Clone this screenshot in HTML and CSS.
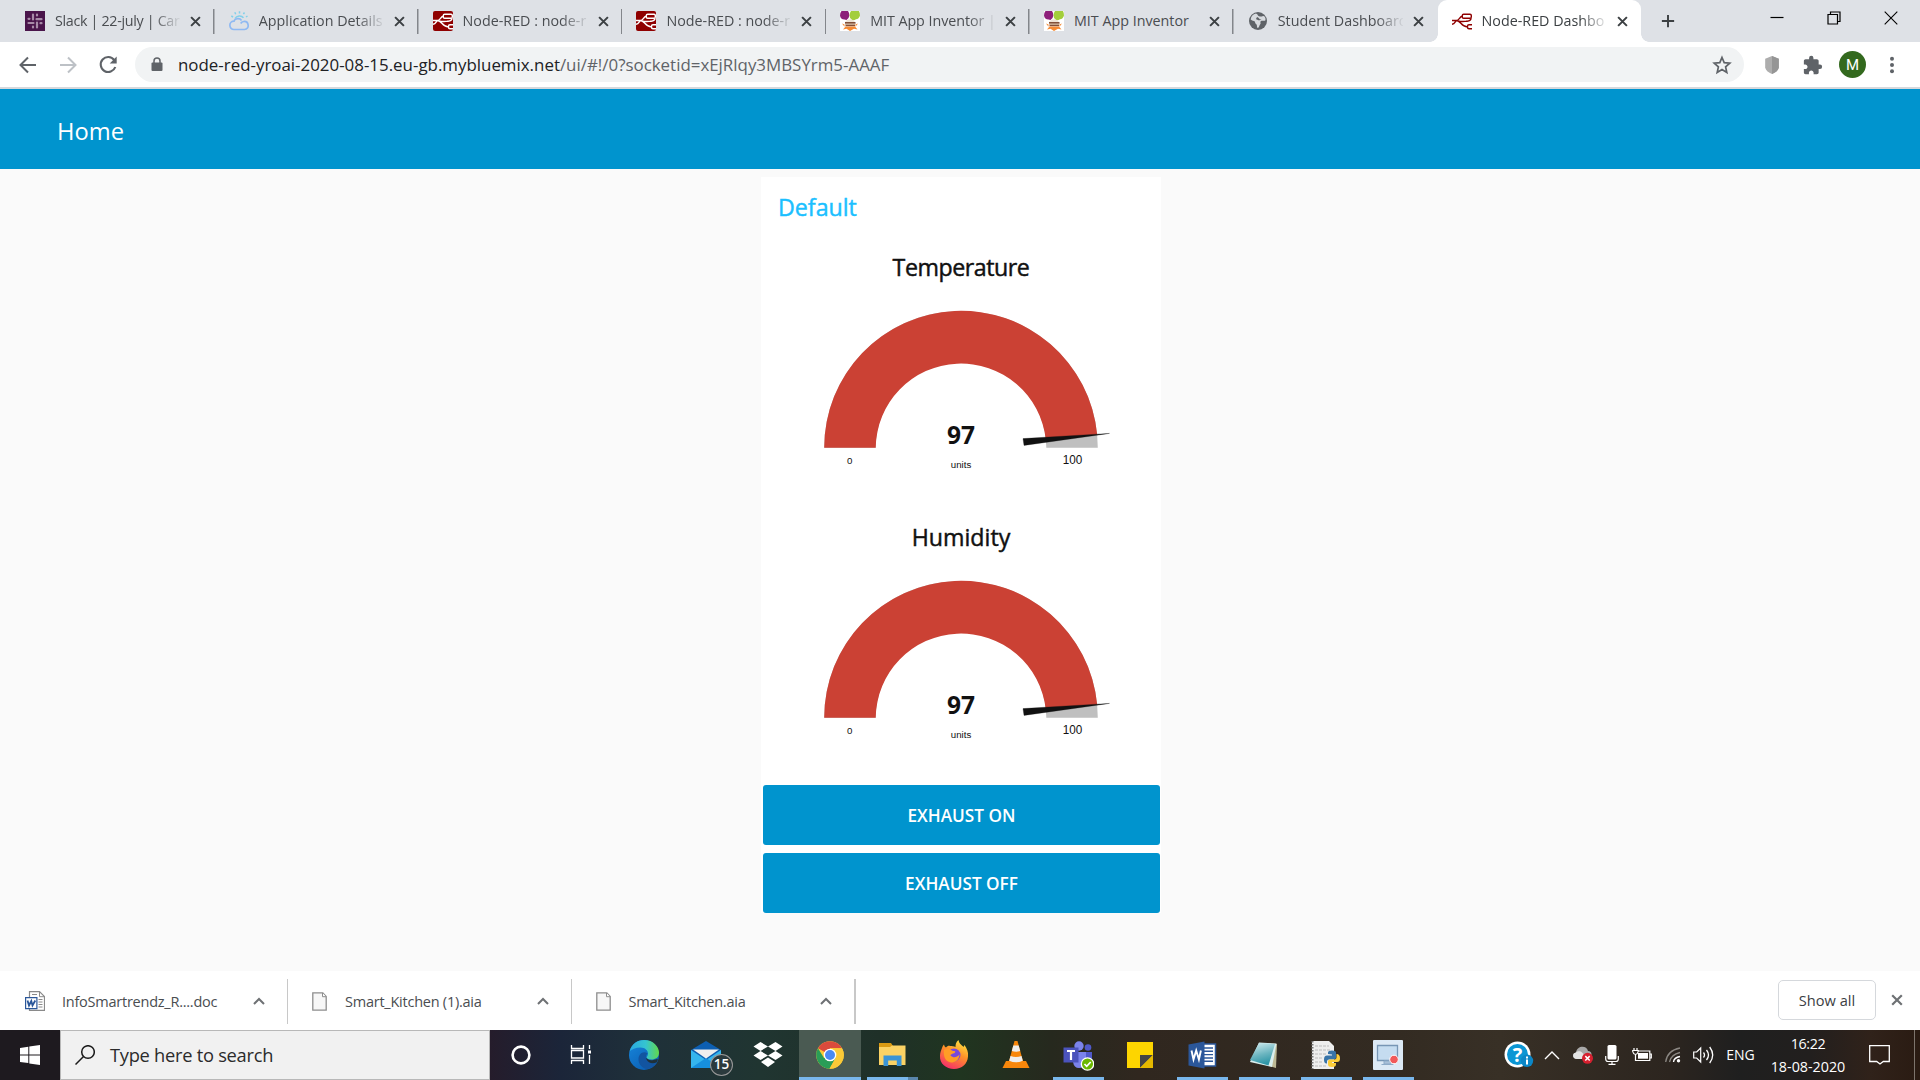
FILE: index.html
```html
<!DOCTYPE html>
<html lang="en">
<head>
<meta charset="utf-8">
<title>Node-RED Dashboard</title>
<link rel="stylesheet" href="styles.css">
</head>
<body>
<svg class="defs" width="0" height="0" aria-hidden="true">
  <symbol id="x" viewBox="0 0 12 12"><path d="M1.2 1.2l9.600 9.600M10.800 1.200L1.200 10.800" fill="none" stroke="currentColor" stroke-width="2.200"/></symbol>
  <symbol id="nr" viewBox="0 0 20 20"><path d="M0 9.500h4.500c3 0 3-4.300 6-4.300M4.500 9.500c4 0 5 6.300 10.500 6.300M0 13.200c3.500 0 3-3.700 5-3.700M6 9.800c3 1 5 .7 8 .5 3-.3 5 0 5-3" fill="none" stroke="currentColor" stroke-width="1.400"/><rect x="10.300" y="3.300" width="9" height="3.900" rx="1.300" fill="none" stroke="currentColor" stroke-width="1.400"/><path d="M20 13.700h-3q-1.500 0-1.500 1.500v1q0 1.500 1.500 1.500h3" fill="none" stroke="currentColor" stroke-width="1.400"/></symbol>
  <symbol id="mit" viewBox="0 0 20 20"><path fill="#fff" d="M0 0h20v20H0z"/><path d="M1.500 0H8q1.500 2 1.300 4.500Q9 8 6.500 9L4.500 8.500Q.5 8.500 0 4.500 0 1.500 1.500 0z" fill="#8d1f7a"/><path d="M11 0h8q1 2 1 4.500Q19 8 16 8.300q-2 1.500-4 .7-2.500-1.500-2.500-4.500Q9.500 2 11 0z" fill="#a3ce3c"/><path d="M6.500 9.500q3.500-2.500 7 0L15 11H5z" fill="#eee3d5"/><path d="M5 11h10.500v1.700H5zM5.500 13.500h9.500v1.700H5.500z" fill="#82503a"/><path d="M5 12.700h10.300v.8H5z" fill="#c9a27c"/><path d="M2 12.500l2.500 1v2.300zM18 12.500l-2.500 1v2.300zM3 18.500l2.500-3H15l2.500 3-3.500-.7L10 20l-3.500-2.200z" fill="#f58a34"/></symbol>
  <symbol id="up" viewBox="0 0 12 8"><path d="M1 7l5-5 5 5" fill="none" stroke="currentColor" stroke-width="2"/></symbol>
  <symbol id="page" viewBox="0 0 15 19"><path d="M.8.8h10l3.400 3.600v13.800H.8z" fill="#f7f7f7" stroke="#8d8d8d" stroke-width="1.300"/><path d="M10.500 1v3.700h3.500" fill="#fff" stroke="#8d8d8d"/></symbol>
  <symbol id="dial" viewBox="0 0 400 190">
    <path d="M63.200 151.700a136.800 136.800 0 0 1 273.600 0h-51.500a85.300 85.300 0 0 0-170.600 0z" fill="#bfbfbf"/>
    <path d="M63.200 151.700a136.800 136.800 0 0 1 273-12.900l-51.400 4.900a85.300 85.300 0 0 0-170.100 8z" fill="#cb4134"/>
    <path d="M262 142.600l86.500-5.200-85.500 12z" fill="#111" stroke="#111" stroke-width=".3"/>
  </symbol>
</svg>

<header class="tabs">
  <div class="tab">
    <svg class="fav" viewBox="0 0 20 20"><path fill="#4a154b" d="M0 0h20v20H0z"/><g stroke="#a88ba8" stroke-width="2.200" stroke-linecap="round" fill="none"><path d="M8 3.500v5M3.500 7.800h1M12 3.500v1M16.500 8.200h-5M12 11.500v5M15.500 12.200h1M8 15.500v1M3.500 12h5"/></g></svg>
    <span class="title tight">Slack | 22-july | Car</span><svg class="close"><use href="#x"/></svg>
  </div>
  <div class="tab">
    <svg class="fav" viewBox="0 0 20 20"><g fill="none" stroke="#82d0ea" stroke-width="1.500"><path d="M6 7.500a5 4.500 0 0 1 8.500-.8M10.500.3v2.200M5.800 1.300l.9 1.900M2.300 5l1.800 1M15.500 1.500l-1.100 1.700M18.500 5l-1.500 1"/><path d="M5 18.500a4 4 0 0 1 0-8.300c.6-2.700 5.800-3.600 7.500-.7M5 18.500h10.500c5.500-.5 4.500-8.500-.8-8-1.700.2-2.500 1-3 2" stroke="#8fb9f2" stroke-width="1.700"/></g></svg>
    <span class="title">Application Details</span><svg class="close"><use href="#x"/></svg>
  </div>
  <div class="tab">
    <svg class="fav red" viewBox="0 0 20 20"><rect width="20" height="20" rx="2" fill="#8f0000"/><use href="#nr" width="20" height="20"/></svg>
    <span class="title">Node-RED : node-r</span><svg class="close"><use href="#x"/></svg>
  </div>
  <div class="tab">
    <svg class="fav red" viewBox="0 0 20 20"><rect width="20" height="20" rx="2" fill="#8f0000"/><use href="#nr" width="20" height="20"/></svg>
    <span class="title">Node-RED : node-r</span><svg class="close"><use href="#x"/></svg>
  </div>
  <div class="tab">
    <svg class="fav"><use href="#mit"/></svg>
    <span class="title piped">MIT App Inventor |</span><svg class="close"><use href="#x"/></svg>
  </div>
  <div class="tab">
    <svg class="fav"><use href="#mit"/></svg>
    <span class="title whole">MIT App Inventor</span><svg class="close"><use href="#x"/></svg>
  </div>
  <div class="tab last">
    <svg class="fav" viewBox="0 0 20 20"><circle cx="10" cy="10" r="9" fill="#5f6368"/><path d="M8 2.500c2.500 1 1 2.500 4 3s3-1.500 4.500 0c1.500 2 1 3 .8 4-1.500 1-3-.5-4.300.5-1.500 1 .5 2.500-1 3.500-1 1-.5 3-2.500 3.500-1-1.500 0-3-1.500-4-1.300-1-.5-2.500-2-3-1.500-.3-2.300-.5-3.300-1.500C3 5.500 5 3 8 2.500z" fill="#dee1e6" opacity=".95"/><path d="M9 6c2 0 2 3 4.500 2.500C12 10 9 9 8 8z" fill="#5f6368"/></svg>
    <span class="title">Student Dashboard</span><svg class="close"><use href="#x"/></svg>
  </div>
  <div class="tab active">
    <svg class="fav dark"><use href="#nr"/></svg>
    <span class="title">Node-RED Dashbo</span><svg class="close"><use href="#x"/></svg>
  </div>
  <svg class="plus" viewBox="0 0 16 16"><path d="M8 1v14M1 8h14" stroke="#3c4043" stroke-width="2.200"/></svg>
  <div class="wincontrols">
    <svg viewBox="0 0 14 14"><path d="M.5 6.500h13" stroke="#000" stroke-width="1.200"/></svg>
    <svg viewBox="0 0 14 14"><path d="M1 3.500h9.500V13H1zM3.500 3.500V1H13v9.500h-2.500" fill="none" stroke="#000" stroke-width="1.200"/></svg>
    <svg viewBox="0 0 14 14"><path d="M.7.700l12.600 12.600M13.300.7L.7 13.300" stroke="#000" stroke-width="1.100"/></svg>
  </div>
</header>

<nav class="toolbar">
  <svg class="nav" viewBox="0 0 20 20"><path d="M18 10H3M10 2.500L2.500 10l7.500 7.500" fill="none" stroke="#5f6368" stroke-width="2"/></svg>
  <svg class="nav" viewBox="0 0 20 20"><path d="M2 10h15M10 2.500l7.500 7.500-7.500 7.500" fill="none" stroke="#bdc1c6" stroke-width="2"/></svg>
  <svg class="nav" viewBox="0 0 20 20"><path d="M16.200 5A7.500 7.500 0 1 0 17.300 12" fill="none" stroke="#5f6368" stroke-width="2.100"/><path d="M18.700 1.500v7h-7z" fill="#5f6368"/></svg>
  <div class="omnibox">
    <svg class="lock" viewBox="0 0 12 15"><path d="M1.500 5.500h9q1 0 1 1V13q0 1-1 1h-9q-1 0-1-1V6.500q0-1 1-1z" fill="#5f6368"/><path d="M3 6V4a3 3 0 0 1 6 0v2" fill="none" stroke="#5f6368" stroke-width="1.500"/></svg>
    <span class="url">node-red-yroai-2020-08-15.eu-gb.mybluemix.net<span class="path">/ui/#!/0?socketid=xEjRlqy3MBSYrm5-AAAF</span></span>
    <svg class="star" viewBox="0 0 20 20"><path d="M10 2.500l2.200 5.200 5.600.5-4.200 3.700 1.200 5.500L10 14.500l-4.800 2.900 1.200-5.500-4.200-3.700 5.600-.5z" fill="none" stroke="#5f6368" stroke-width="1.700"/></svg>
  </div>
  <div class="exts">
    <svg class="shield" viewBox="0 0 20 22"><path d="M10 1l7.500 3v10q-1.500 4.500-7.500 7-6-2.500-7.500-7V4z" fill="#adadad"/><path d="M10 1l7.500 3v10q-1.500 4.500-7.500 7z" fill="#959595"/></svg>
    <svg viewBox="1 0 23 23"><path d="M20.500 11H19V7c0-1.100-.9-2-2-2h-4V3.500a2.500 2.500 0 0 0-5 0V5H4c-1.100 0-2 .9-2 2v3.800h1.500c1.500 0 2.700 1.200 2.700 2.700S5 16.200 3.500 16.200H2V20c0 1.100.9 2 2 2h3.800v-1.500c0-1.500 1.200-2.700 2.700-2.700s2.700 1.200 2.700 2.700V22H17c1.100 0 2-.9 2-2v-4h1.500a2.500 2.500 0 0 0 0-5z" fill="#5f6368"/></svg>
    <span class="avatar">M</span>
    <svg viewBox="0 0 20 20"><circle cx="10" cy="3.700" r="2" fill="#5f6368"/><circle cx="10" cy="10" r="2" fill="#5f6368"/><circle cx="10" cy="16.300" r="2" fill="#5f6368"/></svg>
  </div>
</nav>

<div class="appbar"><h1>Home</h1></div>

<main class="page">
  <section class="card">
    <h2 class="group">Default</h2>
    <div class="gauge">
      <h3 class="long">Temperature</h3>
      <svg viewBox="0 0 400 190" width="400" height="190">
        <use href="#dial" width="400" height="190"/>
        <text class="value" x="200" y="148">97</text>
        <text class="small" x="200" y="171.800">units</text>
        <text class="small" x="88.700" y="167.800">0</text>
        <text class="max" x="311.500" y="167.800" textLength="19.500" lengthAdjust="spacingAndGlyphs">100</text>
      </svg>
    </div>
    <div class="gauge">
      <h3>Humidity</h3>
      <svg viewBox="0 0 400 190" width="400" height="190">
        <use href="#dial" width="400" height="190"/>
        <text class="value" x="200" y="148">97</text>
        <text class="small" x="200" y="171.800">units</text>
        <text class="small" x="88.700" y="167.800">0</text>
        <text class="max" x="311.500" y="167.800" textLength="19.500" lengthAdjust="spacingAndGlyphs">100</text>
      </svg>
    </div>
    <button class="btn">EXHAUST ON</button>
    <button class="btn">EXHAUST OFF</button>
  </section>
</main>

<footer class="shelf">
  <div class="dl first">
    <svg class="doc" viewBox="0 0 20 20"><path d="M4.500.7h10l5 5v13.600h-15z" fill="#fff" stroke="#8a8a8a" stroke-width="1.200"/><path d="M14.500.7v5h5M7 3.500h5M13.500 8.500h4M13.500 11h4M13.500 13.500h4M13.500 16h4" fill="none" stroke="#8a8a8a"/><path d="M.6 6.600h11.300v11H.6z" fill="#fff" stroke="#2b579a" stroke-width="1.200"/><path d="M2.500 9.500l1.500 5L6.300 10l1.200 4.500 2.800-5" fill="none" stroke="#2b579a" stroke-width="1.800"/></svg>
    <span class="name">InfoSmartrendz_R....doc</span><svg class="up"><use href="#up"/></svg>
  </div>
  <div class="dl">
    <svg class="file"><use href="#page"/></svg><span class="name">Smart_Kitchen (1).aia</span><svg class="up"><use href="#up"/></svg>
  </div>
  <div class="dl end">
    <svg class="file"><use href="#page"/></svg><span class="name">Smart_Kitchen.aia</span><svg class="up"><use href="#up"/></svg>
  </div>
  <button class="showall">Show all</button>
  <svg class="dismiss"><use href="#x"/></svg>
</footer>

<div class="taskbar">
  <div class="start"><svg viewBox="0 0 20 20"><path d="M0 2.900l8.300-1.200v7.700H0zM9.300 1.500L20 0v9.400H9.300zM0 10.400h8.300v7.700L0 16.900zM9.300 10.400H20V20l-10.700-1.600z" fill="#fff"/></svg></div>
  <div class="search"><svg viewBox="0 0 20 20"><circle cx="13" cy="7" r="6.300" fill="none" stroke="#1b1b1b" stroke-width="1.500"/><path d="M8.500 11.500L.5 19.500" stroke="#1b1b1b" stroke-width="1.500"/></svg><span>Type here to search</span></div>
  <div class="apps">
    <div class="app"><svg viewBox="0 0 32 32"><circle cx="16" cy="16" r="8.400" fill="none" stroke="#fff" stroke-width="2.600"/></svg></div>
    <div class="app"><svg viewBox="0 0 32 32"><path d="M5.500 6v3.500h12V6M5.500 25v-3.500h12V25M5.500 11.500h12V19h-12zM23.500 6v4M23.500 16v9" fill="none" stroke="#fff" stroke-width="1.300"/><path d="M22 11.500h3v3h-3z" fill="#fff"/></svg></div>
    <div class="app"><svg viewBox="0 0 32 32"><defs><linearGradient id="e1" x1="0" x2="1"><stop offset="0" stop-color="#2aa8e0"/><stop offset=".55" stop-color="#35c4d0"/><stop offset="1" stop-color="#62d94a"/></linearGradient><linearGradient id="e2" x1="0" x2=".8" y2="1"><stop offset="0" stop-color="#1787dd"/><stop offset="1" stop-color="#0a5cb0"/></linearGradient></defs><circle cx="16" cy="16" r="15" fill="url(#e2)"/><path d="M1.500 12.500C4 4.500 9.500 1 16 1c9 0 15 6.500 15 12.500 0 5-3.500 7-7.500 7-3 0-5-1-5-2 0-.8 1.500-1.500 1.500-4 0-3-3-6-7.500-6-5 0-9 2-11 4z" fill="url(#e1)"/><path d="M19 19.500c-2-2-1-3 .5-5-4-3-9 0-9 6 0 4.500 3.500 9.300 9 9.500 4.500-.7 7.800-3.500 9.500-6.500-4 2-8.500.5-10-4z" fill="#1254a0"/><path d="M18.500 18.500c.5 1.800 3 3.300 7 2.400l4-.9c.8.800-.2 2.500-1 3.400-4.500 2-8.500 0-10-3z" fill="#203039"/></svg></div>
    <div class="app"><svg class="wide" viewBox="0 0 44 36"><path d="M7 13L22 4l15 9v18H7z" fill="#0d5fb2"/><path d="M7 13l15 10 15-10v18H7z" fill="#35b5ed"/><path d="M7 31l15-10 15 10z" fill="#168fdd"/><path d="M9 12.500h26L22 21.500z" fill="#eee"/></svg><span class="count">15</span></div>
    <div class="app"><svg viewBox="0 0 32 32"><path d="M8.500 3L1.500 7.500l7 4.500L16 7.500zM23.500 3L16 7.500l7.500 4.500 7-4.500zM8.500 12l-7 4.500 7 4.500 7.500-4.500zM23.500 12L16 16.500l7.500 4.500 7-4.500zM16 18.500L9 23l7 5 7-5z" fill="#fff"/></svg></div>
    <div class="app current"><svg viewBox="0 0 32 32"><circle cx="16" cy="16" r="13.800" fill="#fbc937"/><path d="M16 16L4 9.200A13.800 13.800 0 0 1 28 9.200H16z" fill="#da4a3c"/><path d="M4 9.200a13.800 13.800 0 0 0 11.500 20.600l5.900-10.700L10 19z" fill="#2a9d57"/><path d="M16 9.200h12A13.800 13.800 0 0 1 15.500 29.800L22 19z" fill="#fbc937"/><circle cx="16" cy="16" r="6.300" fill="#fff"/><circle cx="16" cy="16" r="5" fill="#4a8af4"/></svg></div>
    <div class="app folder"><svg viewBox="0 0 32 32"><path d="M3 4h12l2 3v6H3z" fill="#d99a13"/><path d="M3 8h11l2-1.500h13.500V26H3z" fill="#fbd264"/><path d="M7.500 26V16.500h18V27h-4.700v-5.500h-8.600V27H7.500z" fill="#3a94d6"/></svg></div>
    <div class="app"><svg viewBox="0 0 32 32"><defs><linearGradient id="f1" x1=".8" x2=".3" y2="1"><stop offset="0" stop-color="#ffe843"/><stop offset=".45" stop-color="#ff9128"/><stop offset="1" stop-color="#f52d6b"/></linearGradient></defs><path d="M4 9c.5-2 1.500-3 2-3.500.3 1.500 1 2.500 2 3 1-1.500 3-2 4-1.500 2 0 4 0 5.500 1 0-3 .5-5 3-7 .5 4 3.500 5 5 7l1-2c2.500 4 4 7 3.500 11.500C29.500 25 24 30 16 30S1.500 24.500 2 17c0-3 1-5.500 2-8z" fill="url(#f1)"/><circle cx="16" cy="16" r="6.500" fill="#7748dc"/><path d="M6 11c3-2 6-1 9 1 2 0 3 .5 2 1.500-1 1.500-4 1-4.500 3 2.500 2.500 6 2.500 9-1-.5 6-4.500 8-8.500 8C8 23 5 18 6 11z" fill="#ff9d26"/></svg></div>
    <div class="app"><svg viewBox="0 0 32 32"><path d="M6 22h20l3.500 7h-27z" fill="#f8870b"/><path d="M14.500 2h3l6 22q-7.500 4-15 0z" fill="#f8870b"/><path d="M13.300 6.500h5.400l1.500 5.500q-4.200 1.500-8.400 0zM10.500 17q5.500 2 11 0l1.300 4.800q-6.800 3-13.600 0z" fill="#eee"/></svg></div>
    <div class="app run"><svg viewBox="0 0 32 32"><circle cx="17" cy="7" r="4.700" fill="#7b83eb"/><circle cx="26" cy="8.500" r="3.300" fill="#5059c9"/><path d="M21 13h9v9q-1 5-6 4z" fill="#5059c9"/><path d="M12 13h12v10q-2 6-7 6t-6-6z" fill="#7b83eb"/><path d="M1.500 8.500h15v15h-15z" fill="#4b53bc"/><path d="M5 12h8M9 12v9" stroke="#fff" stroke-width="2.200"/><circle cx="25.500" cy="25" r="6.200" fill="#6bb700" stroke="#fff" stroke-width="1.300"/><path d="M22.500 25l2.200 2.300 4-4.300" fill="none" stroke="#fff" stroke-width="1.700"/></svg></div>
    <div class="app"><svg viewBox="0 0 32 32"><path d="M3 3h26v26H3z" fill="#fdd500"/><path d="M16 29V16h13z" fill="#444"/><path d="M16 29l13-13v13z" fill="#e5b800"/></svg></div>
    <div class="app run"><svg viewBox="0 0 32 32"><path d="M14 5h15.500v22H14z" fill="#fff" stroke="#2b579a" stroke-width="1.500"/><path d="M18 9h9M18 12.300h9M18 15.600h9M18 19h9M18 22.300h9" stroke="#2b579a" stroke-width="1.400"/><path d="M2.500 5.500L18.500 2.500v27L2.500 26.500z" fill="#2b579a"/><path d="M5.500 11.500l2 9 2.700-9 2.700 9 2-9" fill="none" stroke="#fff" stroke-width="1.900"/></svg></div>
    <div class="app run"><svg viewBox="0 0 32 32"><defs><linearGradient id="n1" x1="0" x2=".3" y2="1"><stop offset="0" stop-color="#d6eff2"/><stop offset=".6" stop-color="#6bb5c0"/><stop offset="1" stop-color="#2f96a7"/></linearGradient></defs><path d="M12 4l17 1-1 24-7-2z" fill="#bcb894"/><path d="M11 3.500l17.500 1L24 28l-22-5z" fill="#d9eeee"/><path d="M11 4l16 1-6.500 21.500L2 21z" fill="url(#n1)"/></svg></div>
    <div class="app run"><svg viewBox="0 0 32 32"><path d="M2 2h17l5 5v23H2z" fill="#eee"/><path d="M5 7h14M5 11h16M5 15h11M5 19h8M5 23h8M5 27h12" stroke="#bbb" stroke-width="1.200" stroke-dasharray="3 1"/><path d="M2.500 2v28" stroke="#777" stroke-width="2" stroke-dasharray="1.500 1.500"/><path d="M18 15v-1.500q0-2 4-2t4 2v5q0 2-2 2h-5q-2 0-2 2v2q-3 .5-3-4 0-4 3-4h5v-1z" fill="#3874a8"/><path d="M26.500 15q3.500 0 3.500 4.500 0 3.500-3 3.500h-5v1h4v1.500q0 2.500-4 2.500t-4-2.500v-3q0-2 2-2h4.500q2 0 2-2z" fill="#fbcd3a"/></svg></div>
    <div class="app run"><svg viewBox="0 0 32 32"><rect x="1" y="1" width="30" height="30" rx="1" fill="#dce9f5"/><path d="M5.500 6.500h20v15h-20z" fill="#c5dcf0" stroke="#7796b5" stroke-width="1.300"/><path d="M12 22h7v3h-7zM9.500 25.500h12" fill="#a9c0d8" stroke="#8eabc8"/><circle cx="22" cy="20.500" r="4.300" fill="#f15a5a" stroke="#fff"/></svg></div>
  </div>
  <div class="tray">
    <div class="help"><svg viewBox="0 0 30 28"><circle cx="13.500" cy="13.500" r="13" fill="#fff"/><circle cx="13.500" cy="13.500" r="10.500" fill="#0b96d4"/><text class="q" x="13.500" y="21">?</text><circle cx="23" cy="19.800" r="6.200" fill="#0b86c6"/><path d="M23 18.500v5M23 15.500v2" stroke="#fff" stroke-width="2"/></svg></div>
    <div class="chev"><svg viewBox="0 0 16 10"><path d="M1 9l7-7 7 7" fill="none" stroke="#fff" stroke-width="1.400"/></svg></div>
    <div class="cloud"><svg viewBox="0 0 20 18"><path d="M4 13C-1 13-1 7 3 6.500 4-1 14-1 15 5c4 0 5 5 1 7z" fill="#a8a8a8"/><path d="M4 13C-1 13-1 7 3 6.500c2-2 5-1 6 0l4 4v2.500z" fill="#e4e4e4"/><circle cx="14.500" cy="12.300" r="5.500" fill="#d6202f"/><path d="M12.300 10.100l4.400 4.400M16.700 10.100l-4.400 4.400" stroke="#fff" stroke-width="1.500"/></svg></div>
    <div class="mic"><svg viewBox="0 0 14 20"><rect x="2.500" width="9" height="14.500" rx="1.500" fill="#fff"/><path d="M.7 11v3q0 2.500 2.500 2.500h7.600q2.500 0 2.500-2.500v-3M7 16.500v3M3.500 19.400h7" fill="none" stroke="#fff" stroke-width="1.200"/></svg></div>
    <div class="batt"><svg viewBox="0 0 20 14"><path d="M5.500 3h12.300v9.500H3.500V7M17.800 6h1.500v4h-1.500M2 0v2.500M5 0v2.500M.7 2.500h5.500v1q-.5 2.500-2.700 3-2.300-.5-2.800-3z" fill="none" stroke="#fff" stroke-width="1.200"/><path d="M6 5h10v5.700H6z" fill="#fff"/></svg></div>
    <div class="wifi"><svg viewBox="0 0 16 16"><path d="M4.500 15Q6 7.500 15 5.500M.7 15Q2 3.500 15 1" fill="none" stroke="#8b8782" stroke-width="1.300"/><path d="M8.500 15q.5-4.500 6.500-5.500" fill="none" stroke="#fff" stroke-width="1.400"/><circle cx="13.500" cy="13.800" r="1.700" fill="#fff"/></svg></div>
    <div class="spk"><svg viewBox="0 0 21 18"><path d="M.7 6h3l4-4v14l-4-4h-3z" fill="none" stroke="#fff" stroke-width="1.200"/><path d="M10.500 6.500q2 2.500 0 5M13.500 4q4 5 0 10M16.700 1q6 8 0 16" fill="none" stroke="#fff" stroke-width="1.300"/></svg></div>
    <div class="lang">ENG</div>
    <div class="clock"><span class="time">16:22</span><span>18-08-2020</span></div>
    <div class="notif"><svg viewBox="0 0 21 20"><path d="M.7.700h19.600v15.800h-6L11 19l-3.300-2.500h-7z" fill="none" stroke="#fff" stroke-width="1.300"/></svg></div>
    <div class="desk"></div>
  </div>
</div>
</body>
</html>
```
FILE: styles.css
```css
* { box-sizing: border-box; }
body {
  margin: 0;
  width: 1920px;
  height: 1080px;
  overflow: hidden;
  display: flex;
  flex-direction: column;
  background: #fafafa;
  font-family: "Open Sans", "Noto Sans", sans-serif;
  color: #111;
}
svg { display: block; flex: none; }
.defs { position: absolute; }
h1, h2, h3 { margin: 0; font-weight: 400; }
button { font-family: inherit; padding: 0; }

/* Tab strip */
.tabs { display: flex; height: 42px; flex: none; padding-left: 11px; background: #dee1e6; }
.tab {
  display: flex;
  align-items: center;
  width: 203.8px;
  flex: none;
  padding-left: 14px;
  font-size: 14.3px;
  color: #4a4d51;
  background: linear-gradient(#83868b, #83868b) right 9px / 1.5px 25px no-repeat;
}
.tab.last { background: none; }
.tab.active {
  position: relative;
  border-radius: 9px 9px 0 0;
  background: #fff;
  color: #3c4043;
}
.tab.active::before, .tab.active::after {
  content: "";
  position: absolute;
  bottom: 0;
  width: 8px;
  height: 8px;
}
.tab.active::before { left: -8px; background: radial-gradient(circle at 0 0, transparent 7.5px, #fff 8px); }
.tab.active::after { right: -8px; background: radial-gradient(circle at 100% 0, transparent 7.5px, #fff 8px); }
.fav { width: 20px; height: 20px; }
.red { color: #fff; }
.dark { color: #8f0000; }
.title {
  width: 125px;
  margin-left: 10px;
  padding-bottom: 1px;
  overflow: hidden;
  white-space: nowrap;
  -webkit-mask-image: linear-gradient(90deg, #000 98px, transparent 127px);
  mask-image: linear-gradient(90deg, #000 98px, transparent 127px);
}
.title.tight { letter-spacing: -.32px; }
.title.piped { letter-spacing: -.05px; }
.title.whole { -webkit-mask-image: none; mask-image: none; }
.close { width: 11px; height: 11px; margin-left: 10px; color: #3c4043; }
.plus { width: 14px; height: 14px; margin: 14px 0 0 20px; }
.wincontrols { display: flex; gap: 43px; margin: 11px 22px 0 auto; }
.wincontrols svg { width: 14px; height: 14px; }

/* Address bar */
.toolbar {
  display: flex;
  align-items: center;
  height: 47px;
  flex: none;
  padding: 0 18px 0 18px;
  background: #fff;
  border-bottom: 2px solid #d6d8dc;
}
.nav { width: 20px; height: 20px; margin-right: 20px; }
.omnibox {
  display: flex;
  align-items: center;
  flex: 1;
  height: 35px;
  margin-left: -3px;
  padding: 0 12px 0 16px;
  border-radius: 18px;
  background: #f1f3f4;
}
.lock { width: 12px; height: 15px; }
.url { margin-left: 15px; font-size: 16.9px; color: #202124; white-space: nowrap; }
.path { color: #5f6368; }
.star { width: 20px; height: 20px; margin-left: auto; }
.exts { display: flex; align-items: center; margin-left: 18px; gap: 16px; }
.exts svg { width: 20px; height: 20px; }
.exts .shield { margin-right: 5px; }
.avatar {
  width: 27px;
  height: 27px;
  border-radius: 50%;
  background: #33691e;
  color: #fff;
  font: 15px/28px Roboto, sans-serif;
  text-align: center;
}

/* Dashboard */
.appbar { height: 80px; flex: none; padding-left: 57px; background: #0094ce; color: #fff; }
.appbar h1 { font-size: 23.7px; line-height: 84px; }
.page { flex: 1; display: flex; justify-content: center; align-items: flex-start; padding: 8px 0 0 2px; }
.card { width: 400px; height: 736px; background: #fff; }
.group, .gauge h3 { font-size: 23.2px; -webkit-text-stroke: .45px currentColor; }
.group { height: 60px; padding-left: 17px; color: #1bbfff; line-height: 60px; }
.gauge { height: 270px; }
.gauge h3 { height: 58px; line-height: 60px; text-align: center; }
.gauge h3.long { letter-spacing: -.45px; }
.gauge svg { position: relative; top: .5px; }
.gauge svg text { text-anchor: middle; fill: #111; }
.gauge .value { font-size: 24.5px; font-weight: 700; }
.gauge .small { font-family: "Liberation Sans", sans-serif; font-size: 9.7px; }
.gauge .max { font-family: "Liberation Sans", sans-serif; font-size: 13.5px; }
.btn {
  display: block;
  width: 397px;
  height: 60px;
  margin: 8px 0 0 2px;
  border: 0;
  border-radius: 3px;
  background: #0094ce;
  color: #fff;
  font-size: 17.2px;
  font-weight: 600;
}

/* Downloads shelf */
.shelf { display: flex; align-items: center; height: 59px; flex: none; background: #fff; color: #4a4d51; }
.dl { display: flex; align-items: center; width: 283.5px; height: 45px; margin-top: 1px; padding: 0 22px 0 24px; border-right: 1px solid #c8c8c8; font-size: 14.5px; letter-spacing: -.24px; }
.dl.first { width: 288px; padding-left: 25px; }
.dl.end { width: 284.5px; border-right-width: 2px; }
.doc { width: 20px; height: 20px; }
.file { width: 15px; height: 19px; }
.name { margin-left: 18px; white-space: nowrap; }
.doc + .name { margin-left: 17px; }
.up { width: 12px; height: 8px; margin-left: auto; color: #6e7174; }
.showall { width: 98px; height: 40px; margin: -1px 15px 0 auto; border: 1px solid #d5d8dc; border-radius: 5px; background: #fff; color: #3c4043; font-size: 14.6px; }
.dismiss { width: 12px; height: 12px; margin: -2px 17px 0 0; color: #6e7174; }

/* Taskbar */
.taskbar {
  display: flex;
  height: 50px;
  flex: none;
  color: #fff;
  background: linear-gradient(90deg, #1e1a1f 0, #1e1a1f 60px, #251c2b 490px, #1b2539 560px, #1f303a 640px, #203531 760px, #1f3028 880px, #203520 960px, #26291e 1050px, #30271f 1140px, #332b22 1400px, #383026 1500px, #2c251f 1670px, #1f1f1f 1740px, #221f1e 1810px, #30221a 1870px, #2a1b12 1920px);
}
.start { width: 60px; display: grid; place-items: center; }
.start svg { width: 20px; height: 20px; }
.search { display: flex; align-items: center; width: 430px; padding-left: 14px; border: 1px solid #b8b8b8; background: #f1f1f1; color: #2b2b2b; font-size: 18.3px; letter-spacing: -.27px; }
.search svg { width: 20px; height: 20px; }
.search span { margin-left: 15px; padding-bottom: 1px; white-space: nowrap; }
.apps { display: flex; }
.app { position: relative; width: 62px; flex: none; display: grid; place-items: center; }
.app:first-child { width: 61px; }
.app svg { width: 32px; height: 32px; }
.app .wide { width: 44px; height: 36px; }
.app.current { background: linear-gradient(#79b7ec, #79b7ec) bottom / 100% 3px no-repeat, #4a5a52; }
.app.run { background: linear-gradient(#79b7ec, #79b7ec) 6px 100% / 51px 3px no-repeat; }
.app.folder { background: linear-gradient(90deg, #79b7ec 41px, #5a86ac 41px) 6px 100% / 51px 3px no-repeat; }
.count {
  position: absolute;
  left: 35px;
  top: 24px;
  width: 23px;
  height: 22px;
  border: 1px solid #999;
  border-radius: 50%;
  background: #2b3a3d;
  font-size: 13.5px;
  font-weight: 600;
  line-height: 19px;
  text-align: center;
}
.q { font-size: 20px; font-weight: 700; fill: #fff; text-anchor: middle; }
.tray { display: flex; margin-left: auto; }
.tray > div { display: grid; place-items: center; }
.help { width: 33px; }
.help svg { width: 30px; height: 28px; }
.chev { width: 34px; }
.chev svg { width: 16px; height: 10px; }
.cloud { width: 28px; }
.cloud svg { width: 20px; height: 18px; }
.mic { width: 30px; }
.mic svg { width: 14px; height: 20px; }
.batt { width: 30px; }
.batt svg { width: 20px; height: 14px; }
.wifi { width: 32px; }
.wifi svg { width: 16px; height: 16px; }
.spk { width: 29px; }
.spk svg { width: 21px; height: 18px; }
.tray > .lang { width: 45px; padding-bottom: 1px; font-size: 14px; }
.tray > .clock { width: 90px; display: flex; flex-direction: column; align-items: center; padding-top: 2px; font-size: 14.3px; line-height: 23px; }
.time { letter-spacing: -.4px; }
.notif { width: 52px; }
.notif svg { width: 21px; height: 20px; }
.desk { width: 15px; background: linear-gradient(#7d746c, #7d746c) 9px 0 / 1px 100% no-repeat; }
```
